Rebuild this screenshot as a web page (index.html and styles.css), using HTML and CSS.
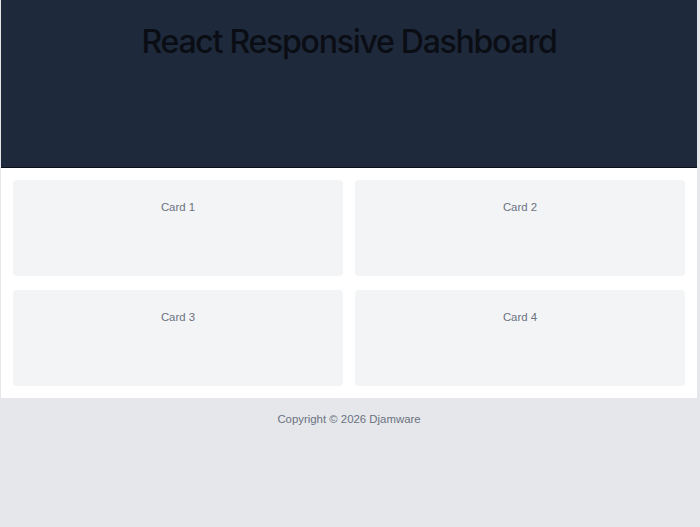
FILE: index.html
```html
<!DOCTYPE html>
<html>
<head>
<meta charset="utf-8">
<link rel="stylesheet" href="styles.css">
</head>
<body>
<div class="app">
  <header class="header">
    <h1 class="title">React Responsive Dashboard</h1>
  </header>
  <main class="main">
    <div class="card">Card 1</div>
    <div class="card">Card 2</div>
    <div class="card">Card 3</div>
    <div class="card">Card 4</div>
  </main>
  <footer class="footer">Copyright © 2026 Djamware</footer>
</div>
</body>
</html>
```
FILE: styles.css
```css
html, body {
  margin: 0;
  padding: 0;
  height: 100%;
}
body {
  background: #e5e7eb;
  font-family: "Liberation Sans", Arial, sans-serif;
}
.app {
  margin-left: 1px;
  width: 696px;
  min-height: 100%;
  display: flex;
  flex-direction: column;
}
.header {
  background: #1e293b;
  height: 167px;
  border-bottom: 1px solid #0b0f17;
  box-sizing: content-box;
}
.title {
  margin: 0;
  padding-top: 22px;
  text-align: center;
  font-family: Inter, sans-serif;
  font-weight: 500;
  font-size: 32px;
  line-height: 40px;
  letter-spacing: -1.25px;
  color: #0b0d14;
}
.main {
  background: #ffffff;
  padding: 12px;
  display: grid;
  grid-template-columns: 1fr 1fr;
  column-gap: 12px;
  row-gap: 14px;
}
.card {
  background: #f3f4f6;
  border-radius: 4px;
  height: 96px;
  box-sizing: border-box;
  padding-top: 20px;
  text-align: center;
  font-size: 11.4px;
  line-height: 14px;
  color: #6b7280;
}
.footer {
  flex: 1;
  background: #e5e7eb;
  text-align: center;
  padding-top: 14px;
  font-size: 11.4px;
  line-height: 14px;
  color: #6b7280;
}
```
